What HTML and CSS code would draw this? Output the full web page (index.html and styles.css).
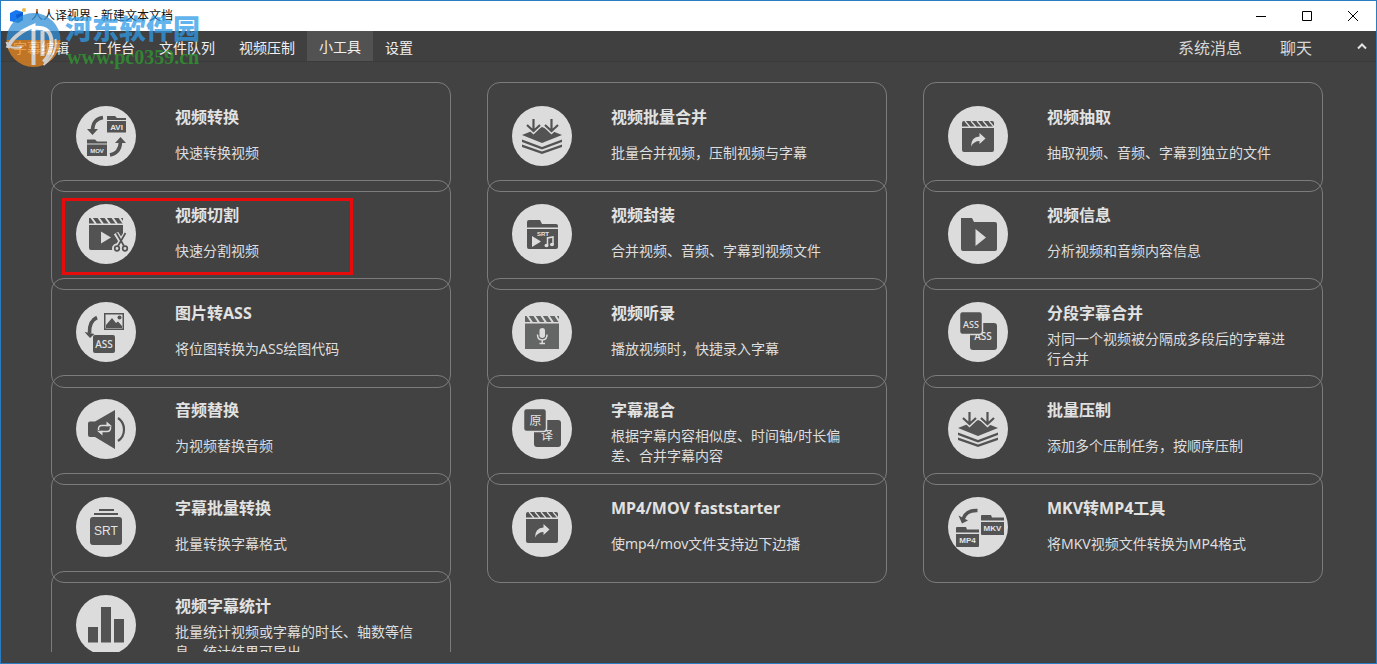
FILE: index.html
```html
<!DOCTYPE html>
<html lang="zh-CN">
<head>
<meta charset="utf-8">
<title>人人译视界 - 新建文本文档</title>
<link rel="stylesheet" href="styles.css">
</head>
<body>
<svg class="defs" aria-hidden="true">
  <symbol id="clapper" viewBox="0 0 60 60">
    <path class="ink" d="M16 15H44Q46 15 46 17V20.500H14V17Q14 15 16 15ZM14 22H46V44Q46 46 44 46H16Q14 46 14 44Z"/>
    <path class="cut" d="M17 15L22 21M23 15L28 21M29 15L34 21M35 15L40 21M41 15L46 21"/>
    <path class="pale" d="M31.500 27L37.500 32.500L31.500 38V35Q26 35 23 40.500Q23 31 31.500 30.500Z"/>
  </symbol>
  <symbol id="layers" viewBox="0 0 60 60">
    <path class="ink" d="M30 21L50 29L30 37L10 29ZM10 33.500L30 41L50 33.500V36L30 43.500L10 36ZM10 38.500L30 45.500L50 38.500V41L30 48L10 41Z"/>
    <path class="halo" d="M21.500 14V24M15 19L21.500 25L28 19M39.500 14V24M33 19L39.500 25L46 19"/>
    <path class="line" d="M21.500 13V25M15 19L21.500 25L28 19M39.500 13V25M33 19L39.500 25L46 19"/>
  </symbol>
</svg>

<div class="window">
  <header class="titlebar">
    <svg class="app-icon" viewBox="0 0 18 18" aria-hidden="true"><path fill="#1677f0" d="M1 6L7 3L14 5V13L9 16L1 14Z"/><path fill="#0b5bd0" d="M7 8L14 5V13L9 16Z"/><circle cx="15" cy="3" r="2" fill="#e9b949"/></svg>
    <h1 class="title">人人译视界 - 新建文本文档</h1>
    <button class="win-btn" aria-label="最小化"><svg viewBox="0 0 12 12"><path d="M1 6.500H11"/></svg></button>
    <button class="win-btn" aria-label="最大化"><svg viewBox="0 0 12 12"><path d="M1.500 1.500H10.500V10.500H1.500Z"/></svg></button>
    <button class="win-btn" aria-label="关闭"><svg viewBox="0 0 12 12"><path d="M1 1L11 11M11 1L1 11"/></svg></button>
  </header>

  <nav class="menu">
    <a class="tab" href="#">字幕编辑</a>
    <a class="tab" href="#">工作台</a>
    <a class="tab" href="#">文件队列</a>
    <a class="tab" href="#">视频压制</a>
    <a class="tab active" href="#">小工具</a>
    <a class="tab" href="#">设置</a>
    <div class="menu-right">
      <a class="side-link" href="#">系统消息</a>
      <a class="side-link" href="#">聊天</a>
      <button class="collapse" aria-label="收起"><svg viewBox="0 0 12 8"><path d="M2 6.500L6 2.500L10 6.500"/></svg></button>
    </div>
  </nav>

  <main class="content">
    <div class="grid">
      <a class="card" href="#">
        <svg class="icon" viewBox="0 0 60 60"><path class="ink" d="M31 10H39L41 12H50V14H31ZM31 15H50V26.500H31ZM11 33.500H19L21 35.500H31V37.500H11ZM11 38.500H31V50H11ZM11 23H22L16.500 29ZM39 37H50L44.500 31Z"/><path class="arrow" d="M27 11.500Q17 13 16.500 24M34 49Q44 47 44.500 36"/><text class="tag" x="40.500" y="24" font-size="8">AVI</text><text class="tag" x="21" y="47" font-size="6">MOV</text></svg>
        <div class="text"><h2>视频转换</h2><p>快速转换视频</p></div>
      </a>
      <a class="card" href="#">
        <svg class="icon" viewBox="0 0 60 60"><use href="#layers"/></svg>
        <div class="text"><h2>视频批量合并</h2><p>批量合并视频，压制视频与字幕</p></div>
      </a>
      <a class="card" href="#">
        <svg class="icon" viewBox="0 0 60 60"><use href="#clapper"/></svg>
        <div class="text"><h2>视频抽取</h2><p>抽取视频、音频、字幕到独立的文件</p></div>
      </a>

      <a class="card marked" href="#">
        <svg class="icon" viewBox="0 0 60 60"><path class="ink" d="M13 14H47V19.500H13ZM13 21H47V46H15Q13 46 13 44Z"/><path class="cut wide" d="M15 13L20 20M22 13L27 20M29 13L34 20M36 13L41 20M43 13L48 20"/><path class="pale" d="M25 27.500L35 33.500L25 39.500Z"/><g class="scissors-halo"><path d="M40 29L48 42M50 29L42 42"/><circle cx="41" cy="44.500" r="2.500"/><circle cx="49" cy="44.500" r="2.500"/></g><g class="scissors"><path d="M40.500 29L48 42M49.500 29L42 42"/><circle cx="41" cy="44.500" r="2.300"/><circle cx="49" cy="44.500" r="2.300"/></g></svg>
        <div class="text"><h2>视频切割</h2><p>快速分割视频</p></div>
      </a>
      <a class="card" href="#">
        <svg class="icon" viewBox="0 0 60 60"><path class="ink" d="M15 18Q15 16 17 16H28L30 20H44Q46 20 46 22V23.500H15ZM15 25H46V43Q46 45 44 45H17Q15 45 15 43Z"/><path class="pale" d="M20 32L29 37.500L20 43Z"/><path class="note" d="M35.500 41V34L41 33V40"/><ellipse class="pale" cx="34.500" cy="41.500" rx="2" ry="1.800"/><ellipse class="pale" cx="40" cy="40.500" rx="2" ry="1.800"/><text class="tag" x="31" y="32" font-size="6">SRT</text></svg>
        <div class="text"><h2>视频封装</h2><p>合并视频、音频、字幕到视频文件</p></div>
      </a>
      <a class="card" href="#">
        <svg class="icon" viewBox="0 0 60 60"><path class="ink" d="M13 14H24L26 18H47Q49 18 49 20V45Q49 47 47 47H15Q13 47 13 45Z"/><path class="pale" d="M27.500 25L38 33.500L27.500 42Z"/></svg>
        <div class="text"><h2>视频信息</h2><p>分析视频和音频内容信息</p></div>
      </a>

      <a class="card" href="#">
        <svg class="icon" viewBox="0 0 60 60"><path class="frame" d="M28.750 11.750H47.250V27.250H28.750Z"/><path class="ink" d="M30 26V23L36 16L40 21L42 19.500L46 24V26ZM8.500 30L18.500 32L14 36Z"/><circle class="ink" cx="43.500" cy="15.500" r="2"/><path class="arrow" d="M21 15.500Q13 19 13.500 31"/><rect class="ink" x="17" y="33" width="22" height="18" rx="2"/><text class="tag soft" x="28" y="46" font-size="10">ASS</text></svg>
        <div class="text"><h2>图片转ASS</h2><p>将位图转换为ASS绘图代码</p></div>
      </a>
      <a class="card" href="#">
        <svg class="icon" viewBox="0 0 60 60"><path class="ink light" d="M13 14H47V20H13ZM13 21.500H47V47H13Z"/><path class="cut wide" d="M15 13L20 20.500M22 13L27 20.500M29 13L34 20.500M36 13L41 20.500M43 13L48 20.500"/><rect class="pale" x="27.500" y="26" width="5.500" height="10" rx="2.750"/><path class="note" d="M25.500 32.500Q25.500 38 30.250 38T35 32.500M30.250 38V41.500M27.500 41.500H33"/></svg>
        <div class="text"><h2>视频听录</h2><p>播放视频时，快捷录入字幕</p></div>
      </a>
      <a class="card" href="#">
        <svg class="icon" viewBox="0 0 60 60"><rect class="ink" x="22" y="21" width="27" height="27" rx="3"/><text class="tag soft" x="35" y="38" font-size="10">ASS</text><rect class="ink ring" x="11.500" y="9.500" width="23" height="23" rx="3"/><text class="tag soft" x="23" y="26" font-size="9">ASS</text></svg>
        <div class="text"><h2>分段字幕合并</h2><p>对同一个视频被分隔成多段后的字幕进行合并</p></div>
      </a>

      <a class="card" href="#">
        <svg class="icon" viewBox="0 0 60 60"><path class="ink" d="M14 22.500H19L39 11V50L19 38H14Q12 38 12 36V24.500Q12 22.500 14 22.500Z"/><path class="line" d="M42 19Q48 23 48 30.500T42 42"/><path class="swap" d="M22.500 31Q22 26.500 26 26.500H32M34.500 27.500Q35 32.500 31 32.500H25"/><path class="pale" d="M30.500 22.500L36 27.200H30.500ZM26.500 36.500L21 31.800H26.500Z"/></svg>
        <div class="text"><h2>音频替换</h2><p>为视频替换音频</p></div>
      </a>
      <a class="card" href="#">
        <svg class="icon" viewBox="0 0 60 60"><rect class="ink" x="22" y="21" width="27" height="27" rx="3"/><text class="tag cjk" x="35" y="41" font-size="12">译</text><rect class="ink ring" x="11.500" y="9.500" width="23" height="23" rx="3"/><text class="tag cjk" x="23.500" y="26" font-size="12">原</text></svg>
        <div class="text"><h2>字幕混合</h2><p>根据字幕内容相似度、时间轴/时长偏差、合并字幕内容</p></div>
      </a>
      <a class="card" href="#">
        <svg class="icon" viewBox="0 0 60 60"><use href="#layers"/></svg>
        <div class="text"><h2>批量压制</h2><p>添加多个压制任务，按顺序压制</p></div>
      </a>

      <a class="card" href="#">
        <svg class="icon" viewBox="0 0 60 60"><path class="ink" d="M23 12H38V14H23ZM18 16H42V18H18Z"/><rect class="ink" x="14" y="20" width="32" height="28" rx="3"/><text class="tag plain" x="30" y="38" font-size="12">SRT</text></svg>
        <div class="text"><h2>字幕批量转换</h2><p>批量转换字幕格式</p></div>
      </a>
      <a class="card" href="#">
        <svg class="icon" viewBox="0 0 60 60"><use href="#clapper"/></svg>
        <div class="text"><h2>MP4/MOV faststarter</h2><p>使mp4/mov文件支持边下边播</p></div>
      </a>
      <a class="card" href="#">
        <svg class="icon" viewBox="0 0 60 60"><path class="ink" d="M33 19Q33 18 34 18H43L44 20.500H56V23.500H33ZM33 25H56V38H34Q33 38 33 37ZM8 31Q8 30 9 30H18L19 32.500H31V35.500H8ZM8 37H31V49Q31 50 30 50H9Q8 50 8 49ZM10.500 18.500L20 23.500L14 26.500Z"/><path class="arrow" d="M29.500 13.500Q18 13 15 22"/><text class="tag" x="44.500" y="34" font-size="8">MKV</text><text class="tag" x="19.500" y="46" font-size="8">MP4</text></svg>
        <div class="text"><h2>MKV转MP4工具</h2><p>将MKV视频文件转换为MP4格式</p></div>
      </a>

      <a class="card" href="#">
        <svg class="icon" viewBox="0 0 60 60"><path class="ink" d="M12 32H22V47.500H12ZM25 12H35V47.500H25ZM38 24H48V47.500H38Z"/></svg>
        <div class="text"><h2>视频字幕统计</h2><p>批量统计视频或字幕的时长、轴数等信息，统计结果可导出</p></div>
      </a>
    </div>
  </main>

  <div class="watermark">
    <svg class="wm-logo" viewBox="0 0 56 56" aria-hidden="true">
      <path fill="#2f8fd8" d="M1 28A27 27 0 0 1 55 28Z"/>
      <path fill="#e8871e" d="M1 28H55A27 27 0 0 1 1 28Z"/>
      <path class="wm-stroke" d="M2 36Q8 22 28 14V53M28 16Q46 14 46 30Q46 42 38 50M37 19V44"/>
      <path class="wm-stroke thin" d="M1 30Q3 38 16 35M50 27Q52 42 38 53"/>
    </svg>
    <div class="wm-text"><span class="wm-name">河东软件园</span><span class="wm-url">www.pc0359.cn</span></div>
  </div>
</div>
</body>
</html>
```

FILE: styles.css
```css
*,
*::after {
  box-sizing: border-box;
}

body {
  margin: 0;
  font-family: "Noto Sans", "Noto Sans CJK SC", sans-serif;
  color: #dedede;
}

a {
  color: inherit;
  text-decoration: none;
}

button {
  padding: 0;
  border: 0;
  background: none;
}

.defs {
  position: absolute;
  width: 0;
  height: 0;
}

.window {
  position: relative;
  display: flex;
  flex-direction: column;
  height: 100vh;
  border: 1px solid #2b7cc0;
  background: #424242;
}

.titlebar {
  display: flex;
  flex: none;
  align-items: center;
  height: 30px;
  padding-left: 8px;
  background: #fff;
}

.app-icon {
  width: 18px;
  height: 18px;
}

.title {
  flex: 1;
  margin: 0 0 0 4px;
  font-size: 12px;
  font-weight: 400;
  line-height: 18px;
  color: #111;
}

.win-btn {
  display: flex;
  align-items: center;
  justify-content: center;
  width: 46px;
  height: 30px;
}

.win-btn svg {
  width: 12px;
  height: 12px;
  fill: none;
  stroke: #000;
}

.menu {
  display: flex;
  flex: none;
  height: 31px;
  border-bottom: 1px solid #3a3a3a;
  background: #404040;
}

.tab {
  padding: 0 12px;
  font-size: 14px;
  line-height: 34px;
  color: #f0f0f0;
}

.tab.active {
  line-height: 32px;
  background: #525252;
}

.menu-right {
  display: flex;
  align-items: flex-start;
  gap: 38px;
  margin-left: auto;
  padding-right: 8px;
}

.side-link {
  font-size: 16px;
  line-height: 34px;
  color: #d8d8d8;
}

.collapse {
  display: flex;
  width: 12px;
  height: 8px;
  margin: 11px 0 0 6px;
}

.collapse svg {
  width: 12px;
  height: 8px;
  fill: none;
  stroke: #e4e4e4;
  stroke-width: 2;
}

.content {
  flex: 1;
  min-height: 0;
  margin-bottom: 11px;
  padding: 20px 53px 0 50px;
  overflow: hidden;
}

.grid {
  display: grid;
  grid-template-columns: repeat(3, 1fr);
  grid-template-rows: 98px 98px 97px;
  grid-auto-rows: 98px;
  column-gap: 36px;
}

.card {
  position: relative;
  display: flex;
  gap: 39px;
  height: 110px;
  padding: 23px 35px 0 24px;
  border: 1px solid #7c7c7c;
  border-radius: 13px;
}

.text {
  flex: 1;
}

.text h2 {
  margin: 0;
  font-size: 16px;
  font-weight: 700;
  line-height: 22px;
  color: #e2e2e2;
}

.text p {
  display: flex;
  align-items: center;
  height: 40px;
  margin: 5px 0 0;
  font-size: 14px;
  line-height: 20px;
}

.marked::after {
  content: "";
  position: absolute;
  top: 17px;
  left: 10px;
  width: 291px;
  height: 77px;
  border: 3px solid #e60c0c;
}

.icon {
  flex: none;
  width: 60px;
  height: 60px;
  border-radius: 50%;
  background: #dcdcdc;
}

.ink {
  fill: #535353;
}

.ink.light {
  fill: #646665;
}

.ink.ring {
  stroke: #dcdcdc;
  stroke-width: 1.5;
}

.pale {
  fill: #dcdcdc;
}

.cut,
.note,
.swap,
.line,
.halo,
.arrow,
.frame,
.scissors,
.scissors-halo {
  fill: none;
  stroke: #dcdcdc;
  stroke-width: 1.2;
}

.cut.wide {
  stroke-width: 2;
}

.note,
.swap {
  stroke-width: 1.5;
}

.line {
  stroke: #535353;
  stroke-width: 2.2;
}

.halo {
  stroke-width: 5;
}

.arrow {
  stroke: #535353;
  stroke-width: 3.6;
}

.frame {
  stroke: #535353;
  stroke-width: 1.5;
}

.scissors {
  stroke: #535353;
  stroke-width: 1.7;
}

.scissors-halo {
  stroke-width: 5;
}

.tag {
  font-family: "Liberation Sans", sans-serif;
  font-weight: 700;
  text-anchor: middle;
  fill: #e4e4e4;
}

.tag.plain {
  font-weight: 400;
}

.tag.soft {
  font-family: "Noto Sans", sans-serif;
  font-weight: 500;
}

.tag.cjk {
  font-family: "Noto Sans CJK SC", sans-serif;
  font-weight: 400;
}

.watermark {
  position: absolute;
  top: 11px;
  left: 4px;
  display: flex;
  gap: 3px;
  opacity: 0.75;
  pointer-events: none;
}

.wm-logo {
  width: 57px;
  height: 56px;
}

.wm-stroke {
  fill: none;
  stroke: #fff;
  stroke-width: 4;
}

.wm-stroke.thin {
  stroke-width: 2;
}

.wm-text {
  display: flex;
  flex-direction: column;
}

.wm-name {
  font-family: "Noto Sans CJK SC", sans-serif;
  font-size: 27px;
  font-weight: 900;
  line-height: 32px;
  color: #2f9be6;
}

.wm-url {
  padding-left: 2px;
  font-family: "Liberation Serif", serif;
  font-size: 20px;
  font-weight: 700;
  line-height: 26px;
  color: #2f9a2f;
}
```
